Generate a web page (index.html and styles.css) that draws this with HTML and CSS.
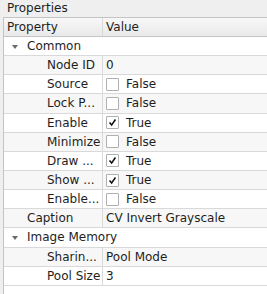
FILE: index.html
```html
<!DOCTYPE html>
<html lang="en">
<head>
    <meta charset="UTF-8">
    <title>Properties</title>
    <link rel="stylesheet" href="styles.css">
</head>
<body>
    <div class="panel-title">Properties</div>
    <div class="tree">
        <div class="row header">
            <div class="cell name">Property</div>
            <div class="cell value">Value</div>
        </div>

        <div class="row category">
            <span class="arrow"></span>Common
        </div>
        <div class="row alt">
            <div class="cell name child">Node ID</div>
            <div class="cell value">0</div>
        </div>
        <div class="row">
            <div class="cell name child">Source</div>
            <div class="cell value"><span class="check"></span>False</div>
        </div>
        <div class="row alt">
            <div class="cell name child">Lock P...</div>
            <div class="cell value"><span class="check"></span>False</div>
        </div>
        <div class="row">
            <div class="cell name child">Enable</div>
            <div class="cell value"><span class="check on"><svg viewBox="0 0 13 13"><path d="M3 6.5 L5.5 9.5 L10 3"/></svg></span>True</div>
        </div>
        <div class="row alt">
            <div class="cell name child">Minimize</div>
            <div class="cell value"><span class="check"></span>False</div>
        </div>
        <div class="row">
            <div class="cell name child">Draw ...</div>
            <div class="cell value"><span class="check on"><svg viewBox="0 0 13 13"><path d="M3 6.5 L5.5 9.5 L10 3"/></svg></span>True</div>
        </div>
        <div class="row alt">
            <div class="cell name child">Show ...</div>
            <div class="cell value"><span class="check on"><svg viewBox="0 0 13 13"><path d="M3 6.5 L5.5 9.5 L10 3"/></svg></span>True</div>
        </div>
        <div class="row">
            <div class="cell name child">Enable...</div>
            <div class="cell value"><span class="check"></span>False</div>
        </div>
        <div class="row alt">
            <div class="cell name">Caption</div>
            <div class="cell value">CV Invert Grayscale</div>
        </div>

        <div class="row category">
            <span class="arrow"></span>Image Memory
        </div>
        <div class="row alt">
            <div class="cell name child">Sharin...</div>
            <div class="cell value">Pool Mode</div>
        </div>
        <div class="row">
            <div class="cell name child">Pool Size</div>
            <div class="cell value">3</div>
        </div>
    </div>
</body>
</html>
```

FILE: styles.css
```css
body {
    margin: 0;
    height: 294px;
    overflow: hidden;
    background-color: #efefef;
    font-family: "DejaVu Sans", sans-serif;
    font-size: 12px;
    color: #1e1e1e;
}

.panel-title {
    height: 17px;
    line-height: 17px;
    padding-left: 7px;
}

.tree {
    margin-left: 3px;
    height: 277px;
    background-color: white;
    border-top: 1px solid #c4c4c4;
    border-left: 1px solid #c4c4c4;
}

.row {
    display: grid;
    grid-template-columns: 99px 1fr;
    height: 18.15px;
    line-height: 18px;
    border-bottom: 1px solid #d9d9d9;
    white-space: nowrap;
}

.row.alt {
    background-color: #f7f7f7;
}

.header {
    height: 18px;
    background: linear-gradient(#f8f8f8, #e9e9e9);
    border-bottom-color: #c4c4c4;
}

.cell {
    padding-left: 3px;
    overflow: hidden;
}

.name {
    border-right: 1px solid #d9d9d9;
    padding-left: 23px;
}

.header .name {
    padding-left: 3px;
}

.name.child {
    padding-left: 43px;
}

.value {
    display: flex;
    align-items: center;
}

.category {
    display: flex;
    align-items: center;
}

.arrow {
    width: 0;
    height: 0;
    margin: 1px 9px 0 8px;
    border-left: 3.5px solid transparent;
    border-right: 3.5px solid transparent;
    border-top: 4px solid #6a6a6a;
}

.check {
    box-sizing: border-box;
    width: 13px;
    height: 13px;
    margin-right: 7px;
    border: 1px solid #b0b0b0;
    border-radius: 1px;
    background-color: white;
}

.check svg {
    display: block;
    width: 11px;
    height: 11px;
    fill: none;
    stroke: #111;
    stroke-width: 1.8;
}
```
